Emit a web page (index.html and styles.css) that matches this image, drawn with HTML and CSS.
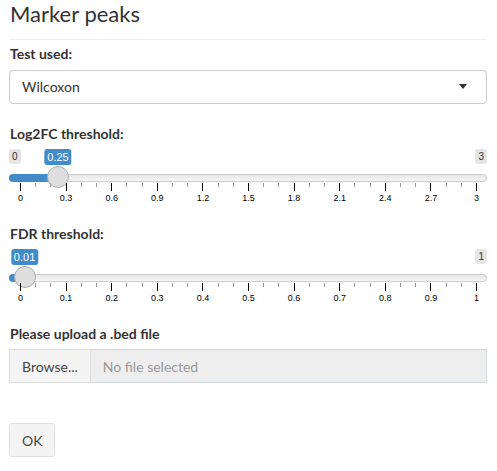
FILE: index.html
```html
<!DOCTYPE html>
<html>
<head>
<meta charset="utf-8">
<link rel="stylesheet" href="styles.css">
</head>
<body>
<div class="page">
  <h3 class="title">Marker peaks</h3>
  <hr class="rule">

  <div class="group">
    <label class="lbl lbl-select">Test used:</label>
    <div class="select">
      <span class="select-text">Wilcoxon</span>
      <span class="caret"></span>
    </div>
  </div>

  <div class="group">
    <label class="lbl">Log2FC threshold:</label>
    <div class="irs">
      <span class="irs-line"></span>
      <span class="irs-bar" style="--p:0.08333"></span>
      <span class="irs-min">0</span>
      <span class="irs-max">3</span>
      <span class="irs-single" style="--p:0.08333">0.25</span>
      <span class="irs-handle" style="--p:0.08333"></span>
      <div class="irs-grid">
        <span class="pol" style="--p:0"></span>
        <span class="pol small" style="--p:0.03333"></span>
        <span class="pol small" style="--p:0.06667"></span>
        <span class="pol" style="--p:0.1"></span>
        <span class="pol small" style="--p:0.13333"></span>
        <span class="pol small" style="--p:0.16667"></span>
        <span class="pol" style="--p:0.2"></span>
        <span class="pol small" style="--p:0.23333"></span>
        <span class="pol small" style="--p:0.26667"></span>
        <span class="pol" style="--p:0.3"></span>
        <span class="pol small" style="--p:0.33333"></span>
        <span class="pol small" style="--p:0.36667"></span>
        <span class="pol" style="--p:0.4"></span>
        <span class="pol small" style="--p:0.43333"></span>
        <span class="pol small" style="--p:0.46667"></span>
        <span class="pol" style="--p:0.5"></span>
        <span class="pol small" style="--p:0.53333"></span>
        <span class="pol small" style="--p:0.56667"></span>
        <span class="pol" style="--p:0.6"></span>
        <span class="pol small" style="--p:0.63333"></span>
        <span class="pol small" style="--p:0.66667"></span>
        <span class="pol" style="--p:0.7"></span>
        <span class="pol small" style="--p:0.73333"></span>
        <span class="pol small" style="--p:0.76667"></span>
        <span class="pol" style="--p:0.8"></span>
        <span class="pol small" style="--p:0.83333"></span>
        <span class="pol small" style="--p:0.86667"></span>
        <span class="pol" style="--p:0.9"></span>
        <span class="pol small" style="--p:0.93333"></span>
        <span class="pol small" style="--p:0.96667"></span>
        <span class="pol" style="--p:1"></span>
        <span class="gtext" style="--p:0">0</span>
        <span class="gtext" style="--p:0.1">0.3</span>
        <span class="gtext" style="--p:0.2">0.6</span>
        <span class="gtext" style="--p:0.3">0.9</span>
        <span class="gtext" style="--p:0.4">1.2</span>
        <span class="gtext" style="--p:0.5">1.5</span>
        <span class="gtext" style="--p:0.6">1.8</span>
        <span class="gtext" style="--p:0.7">2.1</span>
        <span class="gtext" style="--p:0.8">2.4</span>
        <span class="gtext" style="--p:0.9">2.7</span>
        <span class="gtext" style="--p:1">3</span>
      </div>
    </div>
  </div>

  <div class="group">
    <label class="lbl">FDR threshold:</label>
    <div class="irs">
      <span class="irs-line"></span>
      <span class="irs-bar" style="--p:0.01"></span>
      <span class="irs-max">1</span>
      <span class="irs-single" style="--p:0.01">0.01</span>
      <span class="irs-handle" style="--p:0.01"></span>
      <div class="irs-grid">
        <span class="pol" style="--p:0"></span>
        <span class="pol small" style="--p:0.03333"></span>
        <span class="pol small" style="--p:0.06667"></span>
        <span class="pol" style="--p:0.1"></span>
        <span class="pol small" style="--p:0.13333"></span>
        <span class="pol small" style="--p:0.16667"></span>
        <span class="pol" style="--p:0.2"></span>
        <span class="pol small" style="--p:0.23333"></span>
        <span class="pol small" style="--p:0.26667"></span>
        <span class="pol" style="--p:0.3"></span>
        <span class="pol small" style="--p:0.33333"></span>
        <span class="pol small" style="--p:0.36667"></span>
        <span class="pol" style="--p:0.4"></span>
        <span class="pol small" style="--p:0.43333"></span>
        <span class="pol small" style="--p:0.46667"></span>
        <span class="pol" style="--p:0.5"></span>
        <span class="pol small" style="--p:0.53333"></span>
        <span class="pol small" style="--p:0.56667"></span>
        <span class="pol" style="--p:0.6"></span>
        <span class="pol small" style="--p:0.63333"></span>
        <span class="pol small" style="--p:0.66667"></span>
        <span class="pol" style="--p:0.7"></span>
        <span class="pol small" style="--p:0.73333"></span>
        <span class="pol small" style="--p:0.76667"></span>
        <span class="pol" style="--p:0.8"></span>
        <span class="pol small" style="--p:0.83333"></span>
        <span class="pol small" style="--p:0.86667"></span>
        <span class="pol" style="--p:0.9"></span>
        <span class="pol small" style="--p:0.93333"></span>
        <span class="pol small" style="--p:0.96667"></span>
        <span class="pol" style="--p:1"></span>
        <span class="gtext" style="--p:0">0</span>
        <span class="gtext" style="--p:0.1">0.1</span>
        <span class="gtext" style="--p:0.2">0.2</span>
        <span class="gtext" style="--p:0.3">0.3</span>
        <span class="gtext" style="--p:0.4">0.4</span>
        <span class="gtext" style="--p:0.5">0.5</span>
        <span class="gtext" style="--p:0.6">0.6</span>
        <span class="gtext" style="--p:0.7">0.7</span>
        <span class="gtext" style="--p:0.8">0.8</span>
        <span class="gtext" style="--p:0.9">0.9</span>
        <span class="gtext" style="--p:1">1</span>
      </div>
    </div>
  </div>

  <div class="group">
    <label class="lbl">Please upload a .bed file</label>
    <div class="file">
      <span class="browse">Browse...</span>
      <span class="file-name">No file selected</span>
    </div>
  </div>

  <div class="actions">
    <button class="btn" type="button">OK</button>
  </div>
</div>
</body>
</html>
```

FILE: styles.css
```css
* { box-sizing: border-box; }

html, body {
  margin: 0;
  padding: 0;
  background: #fff;
}

body {
  font-family: Lato, "Open Sans", sans-serif;
  font-size: 14px;
  color: #333;
}

.page {
  display: flex;
  flex-direction: column;
  padding: 0 10px 0 9px;
}

.title {
  margin: 0;
  font-size: 22px;
  line-height: 28px;
  font-weight: 400;
  color: #333;
  padding-left: 1px;
}

.rule {
  margin: 11px 0 0;
  border: 0;
  border-top: 1px solid #eee;
  height: 0;
}

.group {
  display: flex;
  flex-direction: column;
  margin-bottom: 15px;
}

.lbl {
  display: block;
  margin: 5px 0 5px;
  font-weight: 700;
  line-height: 20px;
  padding-left: 1px;
}

.lbl-select {
  margin-top: 4px;
  margin-bottom: 6px;
}

.select {
  position: relative;
  height: 34px;
  border: 1px solid #ccc;
  border-radius: 4px;
  background: #fff;
  padding: 0 12px;
  display: flex;
  align-items: center;
}

.select-text {
  line-height: 20px;
}

.caret {
  position: absolute;
  right: 19px;
  top: 13px;
  width: 0;
  height: 0;
  border-style: solid;
  border-width: 5px 4px 0 4px;
  border-color: #333 transparent transparent transparent;
}

/* slider */
.irs {
  position: relative;
  height: 55px;
  font-family: "Liberation Sans", Arial, sans-serif;
  --w: 456px;
  --o: 11px;
}

.irs-line {
  position: absolute;
  top: 25px;
  left: 0;
  right: 0;
  height: 8px;
  border: 1px solid #ccc;
  border-radius: 8px;
  background: linear-gradient(to bottom, #ddd -50%, #fff 150%);
}

.irs-bar {
  position: absolute;
  top: 25px;
  left: 0;
  height: 8px;
  width: calc(var(--o) + var(--p) * var(--w));
  background: #428bca;
  border-radius: 8px 0 0 8px;
}

.irs-min, .irs-max {
  position: absolute;
  top: 0;
  padding: 1px 3px;
  font-size: 10px;
  line-height: 13px;
  color: #333;
  background: rgba(0, 0, 0, 0.1);
  border-radius: 3px;
}

.irs-min { left: 0; }
.irs-max { right: 0; }

.irs-single {
  position: absolute;
  top: 0;
  left: calc(var(--o) + var(--p) * var(--w));
  transform: translateX(-50%);
  padding: 1px 3px;
  font-size: 11px;
  line-height: 14px;
  color: #fff;
  background: #428bca;
  border-radius: 3px;
  white-space: nowrap;
}

.irs-handle {
  position: absolute;
  top: 17px;
  left: calc(var(--p) * var(--w));
  width: 22px;
  height: 22px;
  border: 1px solid #ababab;
  background: #dedede;
  border-radius: 50%;
  box-shadow: 1px 1px 3px rgba(255, 255, 255, 0.3);
}

.irs-grid {
  position: absolute;
  top: 34px;
  left: 0;
  right: 0;
  height: 21px;
}

.pol {
  position: absolute;
  top: 0;
  left: calc(var(--o) + var(--p) * var(--w));
  width: 1px;
  height: 8px;
  background: #000;
}

.pol.small {
  height: 4px;
  background: #999;
}

.gtext {
  position: absolute;
  top: 11px;
  left: calc(var(--o) + var(--p) * var(--w) + 0.5px);
  transform: translateX(-50%);
  font-size: 9px;
  line-height: 9px;
  color: #000;
  white-space: nowrap;
}

/* file input */
.file {
  display: flex;
  height: 34px;
}

.browse {
  display: flex;
  align-items: center;
  padding: 0 12px;
  background: #f4f4f4;
  border: 1px solid #ddd;
  color: #444;
  white-space: nowrap;
}

.file-name {
  flex: 1;
  display: flex;
  align-items: center;
  padding: 0 12px;
  background: #eee;
  border: 1px solid #d2d6de;
  border-left: 0;
  color: #999;
}

.actions {
  margin-top: 25px;
}

.btn {
  height: 34px;
  padding: 0 12px;
  font-family: inherit;
  font-size: 14px;
  color: #444;
  background: #f4f4f4;
  border: 1px solid #ddd;
  border-radius: 3px;
}
```
